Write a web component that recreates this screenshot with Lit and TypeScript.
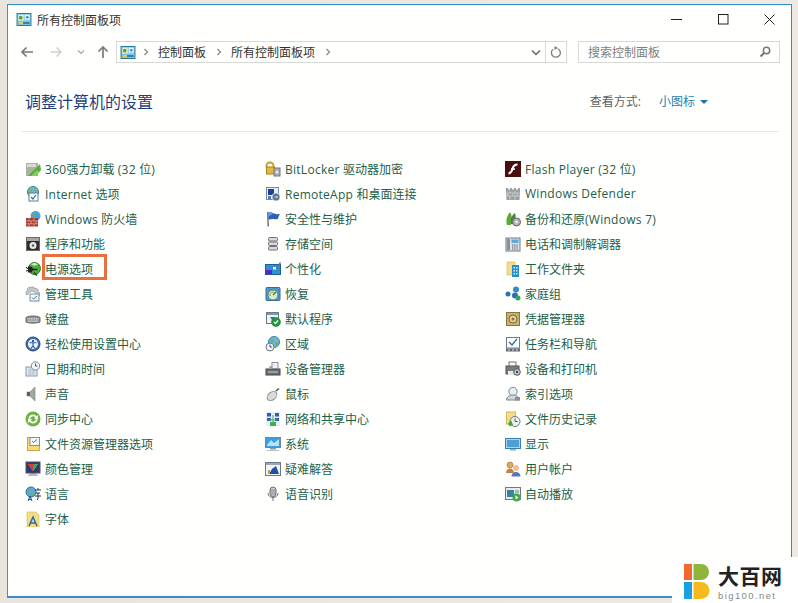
import { LitElement, html, css, svg } from "lit";
import { customElement } from "lit/decorators.js";

const cpIcon = (w: number, h: number) => html`<svg width=${w} height=${h} viewBox="0 0 16 14">
  <rect x=".5" y=".5" width="15" height="13" fill="#8fd0ee" stroke="#1f6d94"/>
  <rect x="2" y="2" width="5.5" height="6" fill="#e8f3d0"/>
  <circle cx="4.5" cy="5" r="2" fill="#5aa03c"/>
  <rect x="9" y="2" width="5" height="5" fill="#f2f6f8"/>
  <circle cx="11.5" cy="4.5" r="1.4" fill="#3a88c0"/>
  <rect x="2" y="9.5" width="12" height="2.5" fill="#2b86b8"/>
  <rect x="2" y="9.5" width="5" height="2.5" fill="#e9c850"/>
</svg>`;

const icons: Record<string, unknown> = {
  uninstall: svg`<rect x="1" y="2" width="12" height="13" fill="#a9b3a2"/><rect x="2" y="3" width="9" height="3" fill="#d7dccf"/><path d="M3 15 L15 3 L16 9 L11 15Z" fill="#55ab3c"/><path d="M6 15l6-6 2 2-3 4z" fill="#8ecb5c"/>`,
  internet: svg`<circle cx="8" cy="6" r="5.5" fill="#6fb6dc" stroke="#3f7fa8"/><path d="M4 3c2 0 3 1 3 3S4 8 3 6zM9 2c2 0 4 2 3 4-2 0-3-2-3-4z" fill="#7ab85a"/><rect x="4" y="7" width="9" height="8" fill="#fff" stroke="#5c7f98"/><path d="M6 11l2 2 3-4" fill="none" stroke="#2b6fa8" stroke-width="1.2"/>`,
  firewall: svg`<circle cx="10.500" cy="5" r="5" fill="#4f9fd8"/><path d="M8 1.500c2 0 3 2 2 4-2 0-3-2-2-4z" fill="#6cb34c"/><rect x="1" y="7" width="12" height="8.500" fill="#a83a30"/><path d="M1 10h12M1 12.800h12M4 7v3M9 7v3M6 10v2.800M11 10v2.800M4 12.800v2.700M9 12.800v2.700" stroke="#e0b8a8" stroke-width=".7"/>`,
  programs: svg`<rect x="1.500" y="1.500" width="13" height="13" fill="#a6a6a6" stroke="#6a6a6a"/><rect x="2" y="5" width="12" height="9" fill="#2d2d2d"/><circle cx="8" cy="9.500" r="3.500" fill="#e8e8e8"/><circle cx="8" cy="9.500" r="1.200" fill="#555"/>`,
  power: svg`<circle cx="9.500" cy="7.500" r="6" fill="#4fae3c" stroke="#2f7a2a"/><path d="M6 3.500c2-2 5-2 7 0-2 1.500-5 1.500-7 0z" fill="#c8e8b8"/><path d="M1 6.500l2 1M1 10l2-.500" stroke="#222" stroke-width="1.100"/><path d="M3 5.500h3.500l2 3-2 3H3z" fill="#222"/><path d="M8 8.500h4.500" stroke="#222" stroke-width="1.500"/><path d="M9 11.500l3 3" stroke="#333" stroke-width="1.500"/>`,
  tools: svg`<path d="M6 1h3l.5 2 2-1 2 2-1 2 2 .5v3h-2l-1-1-1-2-2-1H6L4 6.500 3 8.500H1v-3l2-.5-1-2 2-2 2 1z" fill="#c4c8cc" stroke="#8a9096" stroke-width=".6"/><rect x="5" y="8" width="9" height="7" fill="#f4f6f8" stroke="#7f8f9c"/><path d="M7 11.500l1.500 1.500L12 10" fill="none" stroke="#3a78a8"/>`,
  keyboard: svg`<path d="M1 6.500C4 4.500 12 4.500 15 6.500V11C12 12.500 4 12.500 1 11z" fill="#8f9498" stroke="#666"/><path d="M2.500 7.500h11M2.500 9h11M3 10.500h10" stroke="#d8dadc" stroke-dasharray="1 .7"/>`,
  access: svg`<circle cx="8" cy="8" r="7" fill="#3d6fb5" stroke="#254a80"/><circle cx="8" cy="8" r="5" fill="#eef3f8"/><circle cx="8" cy="5" r="1.200" fill="#2e5a98"/><path d="M4.500 6.800h7M8 6.800v3l-2 2.500M8 9.800l2 2.500" stroke="#2e5a98" stroke-width="1.100" fill="none"/>`,
  datetime: svg`<rect x="1" y="6" width="11" height="9" fill="#dfe6ee" stroke="#8a9cae"/><path d="M3 9h7M3 11h7M3 13h7M5 7v7M8 7v7" stroke="#a5b5c5" stroke-width=".6"/><circle cx="10.500" cy="5" r="4.200" fill="#f4f6f8" stroke="#7a8a98"/><path d="M10.500 2.500V5h2" stroke="#555" fill="none"/>`,
  sound: svg`<path d="M2 6h3l5-5v14l-5-5H2z" fill="#a3a7a3" stroke="#7a7e7a" stroke-width=".6"/><path d="M2 6h3v4H2z" fill="#5d615d"/>`,
  sync: svg`<circle cx="8" cy="8" r="7.500" fill="#6db33f"/><path d="M3.500 8a4.500 4.500 0 0 1 8-2.800L13 4v4H9l1.300-1.500A3 3 0 0 0 5 8zM12.500 8a4.500 4.500 0 0 1-8 2.800L3 12V8h4L5.700 9.500A3 3 0 0 0 11 8z" fill="#fff"/>`,
  explorer: svg`<rect x="2.500" y="1.500" width="12" height="13" fill="#f6d878" stroke="#c8a848"/><rect x="5" y="1.500" width="9.500" height="8" fill="#f6f8fa" stroke="#7f8f9c"/><path d="M7 5l1.500 1.500L12 3.500" fill="none" stroke="#3a78a8"/>`,
  color: svg`<rect x="1" y="1" width="14" height="11" fill="#2a3a78" stroke="#555"/><path d="M3 3h10l-5 7z" fill="#e8c030"/><path d="M3 3h5v7z" fill="#d03a3a"/><path d="M8 3h5l-5 7z" fill="#3aa85a"/><rect x="5" y="12" width="6" height="1.500" fill="#888"/><rect x="3" y="13.500" width="10" height="1.500" fill="#b5b5b5"/>`,
  language: svg`<circle cx="6" cy="6" r="5" fill="#5fa8dc" stroke="#2f6f9f"/><path d="M3 3c2 0 3 1 2 3-2 0-3-1-2-3zM6 7c2 0 3 1 2 3-2 0-3-1-2-3z" fill="#6cb34c"/><path d="M10 4h6M13 2v2M11 7h4M13 7v6l-1 1M10 10h6" stroke="#234" stroke-width="1" fill="none"/><path d="M3 15l2-5 2 5M3.800 13.500h2.400" stroke="#1f4f8f" stroke-width="1" fill="none"/>`,
  fonts: svg`<path d="M2 1h9l3 3v12H2z" fill="#f6dc88" stroke="#d6b858" stroke-width=".6"/><path d="M4 15l4-9 4 9M5.500 12h5" stroke="#1f6fa8" stroke-width="1.500" fill="none"/>`,
  bitlocker: svg`<circle cx="5" cy="5" r="3.500" fill="none" stroke="#c9a030" stroke-width="2"/><rect x="1.500" y="6" width="8" height="7" fill="#e4b83c" stroke="#a8821e"/><rect x="9" y="7" width="6" height="8" fill="#a8aeb4" stroke="#70767c"/><circle cx="12" cy="11" r="1.500" fill="#e8eaec"/>`,
  remoteapp: svg`<rect x="1.500" y="1.500" width="12" height="12" fill="#e6eef6" stroke="#7a8a9c"/><rect x="3" y="3" width="6" height="6" fill="#1f3f9f"/><rect x="3" y="10" width="3" height="3" fill="#4f7fc0"/><circle cx="11" cy="11" r="4" fill="#5a7890" stroke="#fff" stroke-width=".6"/><path d="M9.500 11h3M11.500 10l1 1-1 1" stroke="#fff" stroke-width=".7" fill="none"/>`,
  security: svg`<path d="M2 1l1 .3 1 14-1.500.2z" fill="#5a6a80"/><path d="M3 1.500C7 0 9 4 15 3c-1 2-2 3-2 5-3 1-6-1-9.500 1z" fill="#2f5fb8"/><path d="M3 1.500C5 1 7 2 8 3L3.300 5.500z" fill="#6f97dc"/>`,
  storage: svg`<g fill="#d8dadc" stroke="#6f7478"><rect x="3.500" y="1.500" width="9" height="3.500" rx="1"/><rect x="3.500" y="6" width="9" height="3.500" rx="1"/><rect x="3.500" y="10.500" width="9" height="3.500" rx="1"/></g>`,
  personal: svg`<rect x=".5" y="3.500" width="15" height="10" fill="#2f8fd0" stroke="#1a5f98"/><rect x="1" y="9" width="6" height="4" fill="#5a22d8"/><rect x="8" y="6" width="3" height="2.500" fill="#e8f4fb"/><path d="M11 7l4-6 1 1-4 6z" fill="#607080"/>`,
  recovery: svg`<rect x="1" y="1.500" width="14" height="13" rx="1" fill="#4f95d4" stroke="#2f6fa8"/><circle cx="8" cy="9" r="5" fill="#dfe8d8" stroke="#5c8a50"/><path d="M8 9l3-3" stroke="#3a7f3a" stroke-width="1.300"/><path d="M5 10a3 3 0 0 1 5-3" stroke="#6cb34c" fill="none"/>`,
  defaults: svg`<rect x="1.500" y="1.500" width="12" height="11" fill="#f0f3f6" stroke="#6a7a88"/><rect x="2" y="2" width="11" height="2" fill="#7f97ad"/><path d="M5 6h5l-3 3z" fill="#2f6fb8"/><circle cx="11" cy="11" r="4.500" fill="#1f9a3a" stroke="#0f6a25" stroke-width=".5"/><path d="M9 11l1.500 1.500L13 9.500" stroke="#fff" stroke-width="1.200" fill="none"/>`,
  region: svg`<circle cx="9" cy="6" r="5.500" fill="#6fb6dc" stroke="#3f7fa8"/><path d="M6 3c2 0 3 1 3 3-2 1-4 0-3-3zM10 6c2 0 4 1 3 3-2 1-3-1-3-3z" fill="#6cb34c"/><circle cx="5" cy="11" r="4" fill="#f2f4f6" stroke="#6a7a88"/><path d="M5 8.500V11h2" stroke="#456" fill="none"/>`,
  device: svg`<rect x="1" y="8" width="14" height="6" fill="#6a7074" stroke="#444"/><path d="M3 8l2-3h6l2 3z" fill="#a6aaae"/><rect x="7" y="1.500" width="6" height="6" fill="#eef1f4" stroke="#8a9096"/><rect x="3" y="10.500" width="10" height="1" fill="#c8ccd0"/>`,
  mouse: svg`<ellipse cx="7" cy="10" rx="5.500" ry="3.800" transform="rotate(-38 7 10)" fill="#d8dadc" stroke="#8f9498"/><path d="M11 5l3-2.500" stroke="#444" stroke-width="1.300"/>`,
  network: svg`<rect x="1" y="1" width="14" height="14" fill="#e8ecf4"/><rect x="2" y="2" width="4" height="3.500" fill="#2f5fb8"/><rect x="10" y="2" width="4" height="3.500" fill="#2f5fb8"/><rect x="2" y="7" width="4" height="3" fill="#2f5fb8"/><rect x="10" y="7" width="4" height="3" fill="#2f5fb8"/><rect x="5" y="11" width="6" height="4" fill="#3fae4f"/><path d="M8 4v7M4 9h8" stroke="#3fae4f"/>`,
  system: svg`<rect x=".5" y="1.500" width="15" height="10" fill="#3f9fdc" stroke="#6a8aa0"/><path d="M2 9l4-5 3 3 5-4v7H2z" fill="#b8e2f6"/><rect x="5" y="12" width="6" height="1.500" fill="#8a9ca8"/><rect x="2" y="14" width="12" height="1" fill="#b5c0c8"/>`,
  trouble: svg`<rect x=".5" y="1.500" width="15" height="13" fill="#f0f3f6" stroke="#6a7a88"/><rect x="1" y="2" width="14" height="2" fill="#98a8b8"/><path d="M7 8l4-3 3 8H4z" fill="#1f4fa8"/><rect x="3" y="9" width="2" height="4" fill="#c8a040"/>`,
  speech: svg`<rect x="5" y="1" width="6" height="9.500" rx="3" fill="#cfd2d6" stroke="#6a7074"/><path d="M5 4h6M5 6h6M5 8h6" stroke="#888"/><path d="M3 7c0 6 10 6 10 0M8 12v3" stroke="#6a7074" fill="none"/>`,
  flash: svg`<rect width="16" height="16" y="0" fill="#4a0e0e"/><path d="M12.500 3.500c-4 0-4.500 2.500-5 4.500S6 12 3.500 12.500" stroke="#fff" stroke-width="2" fill="none"/><path d="M6 8h4" stroke="#fff" stroke-width="1.500"/>`,
  defender: svg`<path d="M1 5V2h2v1.500h2V2h2v1.500h2V2h2v1.500h2V2h2v3l-.5 9H1.500z" fill="#9aa0a4"/><path d="M1.500 7h13M1.500 10h13M5 5v2M10 5v2M3 7v3M8 7v3M12 7v3M5 10v4M10 10v4" stroke="#d8dadc" stroke-width=".7"/>`,
  backup: svg`<path d="M2 14C0 8 3 4 5 1c2 3 3 9 1 13z" fill="#5fa83c"/><path d="M6 13C5 8 7 4 10 2c1 3 1 8-1 11z" fill="#3f8a3a"/><circle cx="11.500" cy="11" r="4" fill="#b0b4b8" stroke="#666"/><circle cx="11.500" cy="11" r="1.200" fill="#fff"/>`,
  phone: svg`<rect x="1" y="2" width="14" height="13" fill="#dde3e8" stroke="#6a7a88"/><rect x="2" y="3" width="3" height="11" fill="#8a9096"/><rect x="6.500" y="3.500" width="7" height="3.500" fill="#5fa8d8"/><path d="M7 9h6M7 11h6M7 13h6" stroke="#55606a" stroke-dasharray="1.400 .8"/>`,
  work: svg`<path d="M2 1h8v13H2z" fill="#f6dc88" stroke="#d6b858" stroke-width=".6"/><rect x="7" y="4" width="7" height="12" fill="#1f8fd0"/><path d="M8.500 6h1.500v1.500H8.500zM11 6h1.500v1.500H11zM8.500 9h1.500v1.500H8.500zM11 9h1.500v1.500H11zM8.500 12h1.500v1.500H8.500zM11 12h1.500v1.500H11z" fill="#e4f3fb"/>`,
  homegroup: svg`<circle cx="3" cy="8" r="2.500" fill="#2f6fc0"/><circle cx="11" cy="3.500" r="3" fill="#2f8fc0"/><circle cx="10" cy="9.500" r="3" fill="#2f6fb0"/><circle cx="13" cy="12" r="2.500" fill="#2fa85a"/>`,
  credential: svg`<rect x="1.500" y="1.500" width="13" height="13" fill="#c8b070" stroke="#8a7440"/><circle cx="8" cy="8" r="4" fill="#e4d49c" stroke="#7a6630"/><circle cx="8" cy="8" r="1.500" fill="#8a7440"/>`,
  taskbar: svg`<rect x="1.500" y="1.500" width="13" height="10.500" fill="#fff" stroke="#6f7a86"/><path d="M4 6l3 3 5-6" stroke="#2f6fa8" stroke-width="1.400" fill="none"/><rect x="1" y="12.500" width="14" height="3" fill="#5f6a76"/><path d="M3 14h2M7 14h2M11 14h2" stroke="#dfe3e8"/>`,
  printer: svg`<rect x="4" y="1" width="7" height="5" fill="#f4f6f8" stroke="#777"/><rect x="1" y="5" width="13" height="8" fill="#777c80" stroke="#555"/><rect x="3" y="10" width="6" height="4" fill="#e8eaec"/><circle cx="12" cy="11" r="3.300" fill="#c8ccd0" stroke="#555"/><circle cx="12" cy="11" r="1.200" fill="#444"/>`,
  index: svg`<circle cx="8" cy="5.500" r="4.200" fill="#e8edf2" stroke="#7a8894"/><path d="M1.500 14c0-3 3-5 6.500-5s6.500 2 6.500 5z" fill="#d2d6da" stroke="#7a8894"/><rect x="10" y="11" width="5" height="3.500" fill="#8a9096"/>`,
  history: svg`<rect x="1.500" y="1" width="9" height="12" fill="#f6dc88" stroke="#d6b858"/><circle cx="10" cy="10.500" r="5" fill="#eef1f4" stroke="#777"/><path d="M10 7.500v3h2.500" stroke="#555" fill="none"/><path d="M3 13l3-4 2 5-3 1.500z" fill="#3fa83f"/>`,
  display: svg`<rect x=".5" y="2.500" width="15" height="10" fill="#a8d8f0" stroke="#3a7fa8"/><rect x="2" y="4" width="12" height="7" fill="#4f9fd4"/><rect x="5" y="13" width="6" height="1.500" fill="#9ab"/>`,
  users: svg`<circle cx="5" cy="4" r="3" fill="#e0a868" stroke="#8a5a28" stroke-width=".5"/><path d="M1 12c0-3 2-4.500 4-4.500S9 9 9 12z" fill="#c87f3a"/><circle cx="11" cy="7" r="3" fill="#e8c09a"/><path d="M6.500 15.500c0-3 2-4.500 4.500-4.500s4.500 1.500 4.500 4.500z" fill="#4f78c0"/>`,
  autoplay: svg`<rect x=".5" y="1.500" width="15" height="12" fill="#e8ecf0" stroke="#6a7a88"/><rect x="2" y="4" width="7" height="7" fill="#3f7f9f"/><rect x="10" y="4" width="4" height="3" fill="#a8b4c0"/><circle cx="11.500" cy="11.500" r="4" fill="#3fa83f"/><path d="M10.500 9.500l3 2-3 2z" fill="#fff"/>`,
};

const cols: [string, string][][] = [
  [["uninstall","360强力卸载 (32 位)"],["internet","Internet 选项"],["firewall","Windows 防火墙"],["programs","程序和功能"],["power","电源选项"],["tools","管理工具"],["keyboard","键盘"],["access","轻松使用设置中心"],["datetime","日期和时间"],["sound","声音"],["sync","同步中心"],["explorer","文件资源管理器选项"],["color","颜色管理"],["language","语言"],["fonts","字体"]],
  [["bitlocker","BitLocker 驱动器加密"],["remoteapp","RemoteApp 和桌面连接"],["security","安全性与维护"],["storage","存储空间"],["personal","个性化"],["recovery","恢复"],["defaults","默认程序"],["region","区域"],["device","设备管理器"],["mouse","鼠标"],["network","网络和共享中心"],["system","系统"],["trouble","疑难解答"],["speech","语音识别"]],
  [["flash","Flash Player (32 位)"],["defender","Windows Defender"],["backup","备份和还原(Windows 7)"],["phone","电话和调制解调器"],["work","工作文件夹"],["homegroup","家庭组"],["credential","凭据管理器"],["taskbar","任务栏和导航"],["printer","设备和打印机"],["index","索引选项"],["history","文件历史记录"],["display","显示"],["users","用户帐户"],["autoplay","自动播放"]],
];

// Latin runs get slightly wider tracking; CJK stays on its 12px grid.
const label = (t: string) =>
  t.split(/([\x20-\x7e]+)/).filter(Boolean).map((p) =>
    /[\x20-\x7e]/.test(p) ? html`<span class="lat">${p}</span>` : p);

@customElement("app-root")
export class AppRoot extends LitElement {
  static styles = css`
    :host { display: block; width: 798px; height: 603px; position: relative; overflow: hidden;
      background: linear-gradient(90deg, #e9e4dc, #eeeae2); font-family: "Open Sans", "Noto Sans CJK SC", sans-serif; box-sizing: border-box; padding: 4px 6px 5px 7px; }
    .window { height: 100%; box-sizing: border-box; background: #fffffd; border: 1px solid #2a8fc8; border-left-color: #3f8fd0; border-bottom: 2px solid #3f8ad0;
      display: flex; flex-direction: column; }
    .title { height: 27px; display: flex; align-items: center; padding-left: 8px; gap: 5px; font-size: 12px; color: #333; margin-top: 1px; }
    .title .cp { display: flex; }
    .caps { margin-left: auto; margin-right: -1px; display: flex; }
    .caps span { width: 46px; display: flex; justify-content: center; align-items: center; height: 24px; }
    .toolbar { height: 24px; margin-top: 7px; display: flex; align-items: center; padding-left: 12px; }
    .nav { display: flex; align-items: center; width: 96px; flex: none; }
    .nav svg { flex: none; }
    .addr { width: 451px; height: 22px; flex: none; box-sizing: border-box; border: 1px solid #d8d8d6; display: flex; align-items: center; padding-left: 3px; font-size: 12px; color: #333; }
    .addr .cp { display: flex; margin-right: 7px; }
    .crumb { margin: 0 10px 0 9px; }
    .chev { display: flex; }
    .addr .down { margin-left: auto; width: 19px; display: flex; justify-content: center; }
    .addr .refresh { width: 20px; height: 100%; border-left: 1px solid #d8d8d6; display: flex; align-items: center; justify-content: center; }
    .search { width: 202px; height: 22px; flex: none; margin-left: 11px; box-sizing: border-box; border: 1px solid #d8d8d6; display: flex; align-items: center; padding: 0 8px 0 9px; font-size: 12px; color: #7d7d7d; justify-content: space-between; }
    .head { display: flex; align-items: center; height: 28px; margin-top: 23px; padding-left: 17px; }
    h1 { margin: 0; font-weight: 400; font-size: 16px; color: #1f3f7c; }
    .view { margin-left: auto; margin-right: 83px; display: flex; align-items: center; font-size: 12px; color: #5f5f5f; }
    .view a { color: #1f7fb0; margin-left: 18px; }
    .view i { width: 0; height: 0; border: 4px solid transparent; border-top: 4px solid #1f6fa8; border-bottom: 0; margin-left: 5px; margin-top: 1px; }
    hr { border: 0; border-top: 1px solid #e4e6e6; margin: 16px 13px 0 14px; }
    .grid { display: grid; grid-template-columns: 240px 240px 240px; padding: 24px 0 0 17px; }
    .col { display: flex; flex-direction: column; }
    .row { height: 25px; display: flex; align-items: center; gap: 4px; font-size: 12px; color: #1c6048; white-space: nowrap; }
    .row svg { flex: none; width: 16px; height: 16px; }
    .row .txt { position: relative; }
    .lat { letter-spacing: .27px; }
    .row.mark .txt::after { content: ""; position: absolute; left: -3px; width: 65px; top: calc(50% - 15px); height: 26px; box-sizing: border-box; border: 3px solid #e8703f; }
    .wm { position: absolute; right: 0; bottom: 0; width: 126px; height: 46px; background: #fff; display: flex; align-items: center; gap: 8px; padding: 3px 0 0 12px; box-sizing: border-box; }
    .wm .t { display: flex; flex-direction: column; gap: 5px; }
    .wm b { font: 700 21px/22px "Noto Sans CJK SC", sans-serif; color: #222; letter-spacing: .5px; }
    .wm small { font: 9.500px/9px "Liberation Sans", sans-serif; color: #888; letter-spacing: 1.400px; }
  `;

  private chev(c = "#8a8a8a") {
    return html`<span class="chev"><svg width="6" height="8" viewBox="0 0 6 8"><path d="M1.500 1l3 3-3 3" stroke=${c} stroke-width="1.300" fill="none"/></svg></span>`;
  }

  render() {
    return html`
      <div class="window">
        <div class="title">
          <span class="cp">${cpIcon(16, 13)}</span>
          <span>所有控制面板项</span>
          <div class="caps">
            <span><svg width="12" height="2"><path d="M0 .5h11" stroke="#222"/></svg></span>
            <span><svg width="11" height="11"><rect x=".5" y=".5" width="9.500" height="9.500" fill="none" stroke="#222"/></svg></span>
            <span><svg width="11" height="11"><path d="M.5.500l10 10M10.500.500l-10 10" stroke="#222"/></svg></span>
          </div>
        </div>
        <div class="toolbar">
          <div class="nav">
            <svg width="14" height="12" viewBox="0 0 14 12"><path d="M13 6H2M6.500 1.500L2 6l4.500 4.500" stroke="#7a7a7a" stroke-width="1.700" fill="none"/></svg>
            <svg style="margin-left:16px" width="13" height="12" viewBox="0 0 13 12"><path d="M1 6h10M6.500 1.500L11 6l-4.500 4.500" stroke="#d0d0d0" stroke-width="1.500" fill="none"/></svg>
            <svg style="margin-left:14px" width="8" height="6" viewBox="0 0 8 6"><path d="M1 1.500l3 3 3-3" stroke="#a8a8a8" stroke-width="1.200" fill="none"/></svg>
            <svg style="margin-left:12px" width="12" height="14" viewBox="0 0 12 14"><path d="M6 13V2M1.500 6.500L6 2l4.500 4.500" stroke="#7a7a7a" stroke-width="1.700" fill="none"/></svg>
          </div>
          <div class="addr">
            <span class="cp">${cpIcon(16, 13)}</span>
            ${this.chev()}<span class="crumb">控制面板</span>${this.chev()}<span class="crumb">所有控制面板项</span>${this.chev()}
            <span class="down"><svg width="10" height="7" viewBox="0 0 10 7"><path d="M1 1.500l4 4 4-4" stroke="#666" stroke-width="1.500" fill="none"/></svg></span>
            <span class="refresh"><svg width="12" height="13" viewBox="0 0 12 13"><path d="M3 3.200a4.500 4.500 0 1 0 5-.5" stroke="#7f7f7f" stroke-width="1.300" fill="none"/><path d="M5.500 0v4L9 2z" fill="#7f7f7f" transform="translate(-1 0)"/></svg></span>
          </div>
          <div class="search">
            <span>搜索控制面板</span>
            <svg width="12" height="12" viewBox="0 0 12 12"><circle cx="7.500" cy="4.500" r="3.200" fill="none" stroke="#777" stroke-width="1.500"/><path d="M5 7l-3.500 3.500" stroke="#777" stroke-width="2"/></svg>
          </div>
        </div>
        <div class="head">
          <h1>调整计算机的设置</h1>
          <div class="view">查看方式: <a>小图标</a><i></i></div>
        </div>
        <hr />
        <div class="grid">
          ${cols.map((c) => html`<div class="col">
            ${c.map(([k, t]) => html`<div class="row ${k === "power" ? "mark" : ""}">
              <svg viewBox="0 0 16 16">${icons[k]}</svg><span class="txt">${label(t)}</span>
            </div>`)}
          </div>`)}
        </div>
      </div>
      <div class="wm">
        <svg width="26" height="35" viewBox="0 0 26 35">
          <rect x="0" y="0" width="8" height="16" fill="#f0682f"/>
          <path d="M9.500 0H17a8 8 0 0 1 0 16H9.500z" fill="#8cb53a"/>
          <rect x="0" y="18" width="8" height="17" fill="#1aa0dc"/>
          <path d="M9.500 18H17a8.500 8.500 0 0 1 0 17H9.500z" fill="#f6b91e"/>
        </svg>
        <div class="t"><b>大百网</b><small>big100.net</small></div>
      </div>
    `;
  }
}
